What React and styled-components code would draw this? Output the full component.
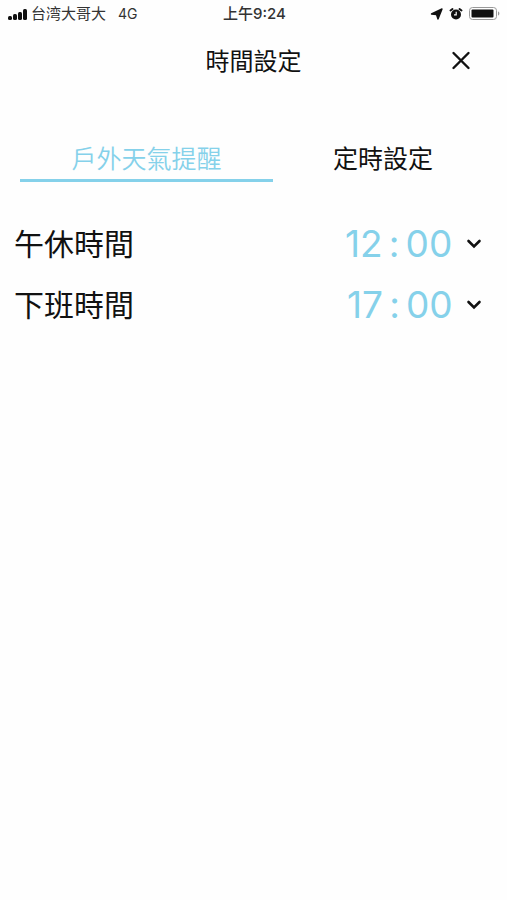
import React, { useState } from "react";
import styled, { createGlobalStyle } from "styled-components";

const Global = createGlobalStyle`
  * { box-sizing: border-box; }
  body {
    margin: 0;
    background: #fefefe;
    color: #111;
    font-family: Inter, "Noto Sans CJK TC", sans-serif;
  }
  button, select, h1 { font: inherit; color: inherit; margin: 0; }
  button, select { cursor: pointer; }
`;

const Screen = styled.div`
  min-height: 100vh;
  background: #fefefe;
`;

const StatusBar = styled.div`
  display: grid;
  grid-template-columns: 1fr auto 1fr;
  align-items: center;
  height: 28px;
  padding: 0 6px 0 8px;
  font-size: 15px;
  line-height: 20px;
  color: #333;
`;

const StatusGroup = styled.div`
  display: flex;
  align-items: center;
  justify-content: ${(p) => (p.$end ? "flex-end" : "flex-start")};
  gap: ${(p) => (p.$end ? 6 : 3)}px;
  white-space: nowrap;
`;

const Network = styled.span`
  margin-left: 9px;
  font-size: 14px;
`;

const Clock = styled.time`
  font-size: 15px;
  line-height: 20px;
  font-weight: 500;
`;

const Header = styled.header`
  display: grid;
  grid-template-columns: 1fr auto 1fr;
  align-items: center;
  height: 64px;
  padding: 0 32px;
`;

const Title = styled.h1`
  grid-column: 2;
  padding-top: 4px;
  font-size: 24px;
  line-height: 32px;
  font-weight: 400;
`;

const CloseButton = styled.button`
  justify-self: end;
  display: flex;
  padding: 4px;
  border: 0;
  background: none;
`;

const Tabs = styled.div`
  display: grid;
  grid-template-columns: 23fr 20fr;
  padding: 0 14px 0 20px;
  margin-top: 48px;
`;

const Tab = styled.button`
  height: 42px;
  padding: 0 0 2px;
  border: 0;
  border-bottom: 3px solid ${(p) => (p.$active ? "#85d1ea" : "transparent")};
  background: none;
  font-size: 25px;
  font-weight: ${(p) => (p.$active ? 350 : 400)};
  line-height: 32px;
  color: ${(p) => (p.$active ? "#85d1ea" : "#111")};
`;

const Rows = styled.div`
  padding: 31px 24px 0 14px;
`;

const Row = styled.div`
  display: flex;
  align-items: center;
  justify-content: space-between;
  height: 61px;
`;

const RowLabel = styled.label`
  font-size: 30px;
  line-height: 40px;
`;

const Picker = styled.div`
  display: flex;
  align-items: center;
  gap: 12px;
`;

const TimeSelect = styled.select`
  appearance: none;
  padding: 0;
  border: 0;
  background: none;
  color: #85d1ea;
  font-size: 37px;
  line-height: 44px;
  font-feature-settings: "calt" 0;
`;

const Signal = () => (
  <svg width="20" height="13" viewBox="0 0 20 13" fill="#111" aria-hidden="true">
    <rect x="0" y="8" width="4" height="4" rx="1.500" />
    <rect x="5" y="6" width="4" height="6" rx="1.500" />
    <rect x="10" y="4" width="4" height="8" rx="1.500" />
    <rect x="15" y="1" width="4" height="11" rx="1.500" />
  </svg>
);

const LocationIcon = () => (
  <svg width="13" height="13" viewBox="0 0 13 13" fill="#111" aria-hidden="true">
    <path d="M12 1 8 11 6.500 6.500 1.500 6Z" stroke="#111" strokeWidth="1.400" strokeLinejoin="round" />
  </svg>
);

const AlarmIcon = () => (
  <svg width="14" height="14" viewBox="0 0 14 14" aria-hidden="true">
    <circle cx="7" cy="7.500" r="5" fill="#111" />
    <path d="M1.500 3.500 3.500 2M12.500 3.500 10.500 2" stroke="#111" strokeWidth="2" strokeLinecap="round" />
    <path d="M7.200 4.800v3H5" fill="none" stroke="#fefefe" strokeWidth="1.200" />
  </svg>
);

const BatteryIcon = () => (
  <svg width="32" height="14" viewBox="0 0 32 14" aria-hidden="true">
    <rect x="0.500" y="0.500" width="27" height="12" rx="3" fill="none" stroke="#999" />
    <rect x="2.500" y="2.500" width="22" height="8" rx="1" fill="#111" />
    <path d="M29 4.500c1.800.5 1.800 3.500 0 4Z" fill="#999" />
  </svg>
);

const CloseIcon = () => (
  <svg width="20" height="20" viewBox="0 0 20 20" fill="none" stroke="#111" strokeWidth="2.400" strokeLinecap="round" aria-hidden="true">
    <path d="M2.500 3l15 15M17.500 3l-15 15" />
  </svg>
);

const Chevron = () => (
  <svg width="18" height="18" viewBox="0 0 18 18" fill="none" stroke="#111" strokeWidth="2.600" strokeLinecap="round" aria-hidden="true">
    <path d="M3.500 6 9 11.500 14.500 6" />
  </svg>
);

const tabs = ["戶外天氣提醒", "定時設定"];

const times = [
  { id: "lunch", label: "午休時間", value: "12\u2006:\u200600" },
  { id: "leave", label: "下班時間", value: "17\u2006:\u200600" },
];

export default function App() {
  const [tab, setTab] = useState(0);
  return (
    <Screen>
      <Global />
      <StatusBar>
        <StatusGroup>
          <Signal />
          <span>台湾大哥大</span>
          <Network>4G</Network>
        </StatusGroup>
        <Clock>上午9:24</Clock>
        <StatusGroup $end>
          <LocationIcon />
          <AlarmIcon />
          <BatteryIcon />
        </StatusGroup>
      </StatusBar>
      <Header>
        <Title>時間設定</Title>
        <CloseButton type="button" aria-label="關閉">
          <CloseIcon />
        </CloseButton>
      </Header>
      <Tabs role="tablist">
        {tabs.map((label, i) => (
          <Tab
            key={label}
            type="button"
            role="tab"
            aria-selected={tab === i}
            $active={tab === i}
            onClick={() => setTab(i)}
          >
            {label}
          </Tab>
        ))}
      </Tabs>
      <Rows>
        {times.map((t) => (
          <Row key={t.id}>
            <RowLabel htmlFor={t.id}>{t.label}</RowLabel>
            <Picker>
              <TimeSelect id={t.id}>
                <option>{t.value}</option>
              </TimeSelect>
              <Chevron />
            </Picker>
          </Row>
        ))}
      </Rows>
    </Screen>
  );
}
